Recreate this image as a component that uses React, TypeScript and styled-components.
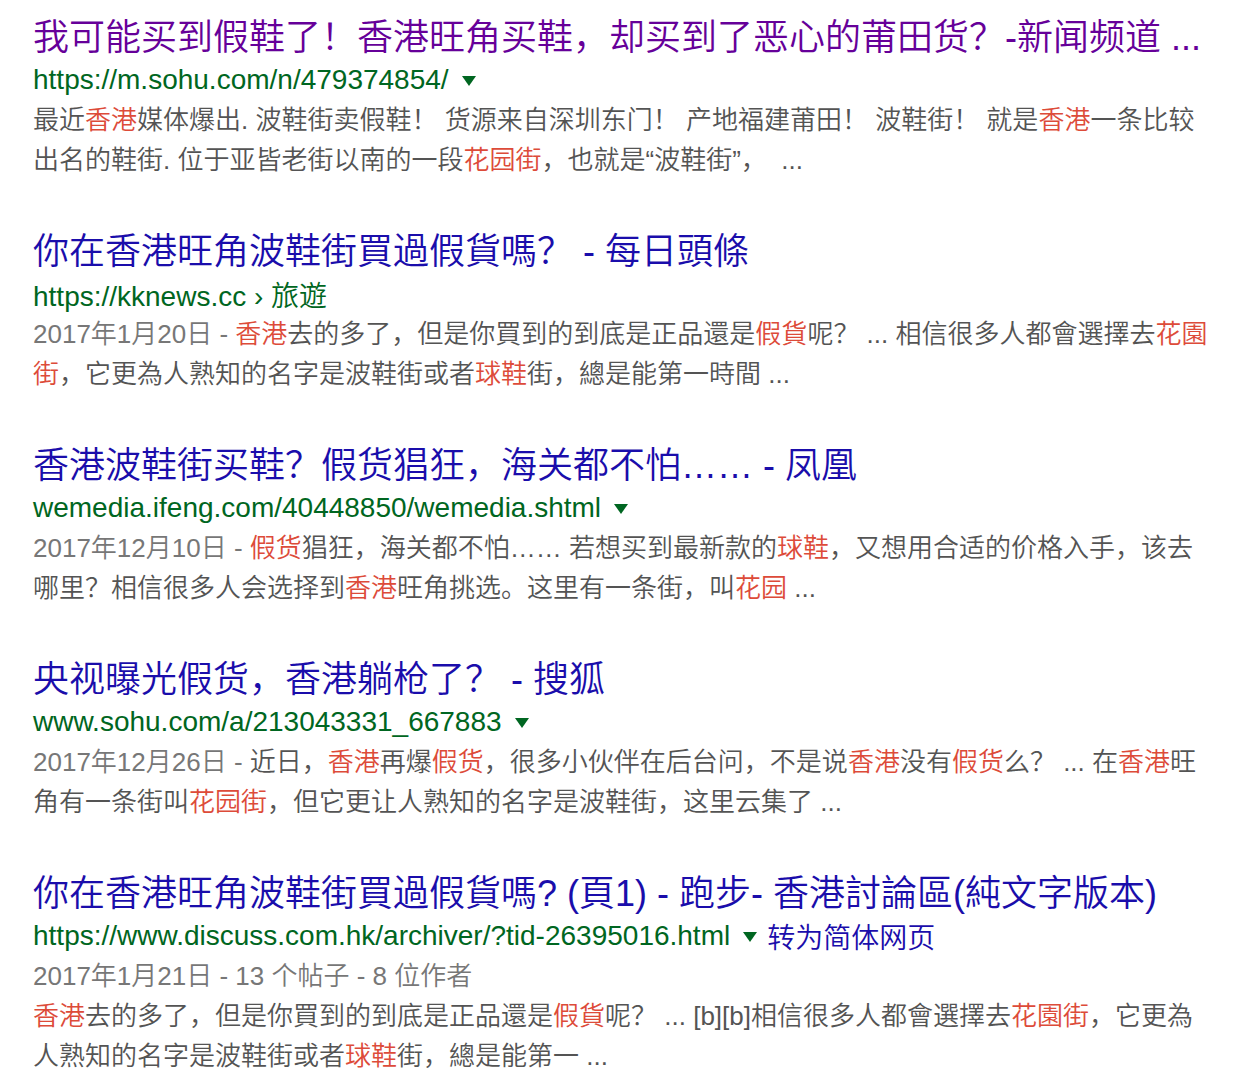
import styled, { createGlobalStyle } from "styled-components";

const GlobalStyle = createGlobalStyle`
  html, body {
    margin: 0;
    padding: 0;
    background: #ffffff;
  }
  body {
    font-family: "Liberation Sans", Arial, "Noto Sans CJK SC", sans-serif;
    font-weight: 350;
  }
`;

const Page = styled.main`
  padding: 16px 0 0 33px;
  display: flex;
  flex-direction: column;
  gap: 50px;
`;

const Result = styled.div`
  display: flex;
  flex-direction: column;
`;

const Title = styled.a<{ $visited?: boolean }>`
  display: block;
  font-size: 36px;
  line-height: 44px;
  color: ${(p) => (p.$visited ? "#660099" : "#1a0dab")};
  text-decoration: none;
  white-space: nowrap;
  cursor: pointer;
`;

const UrlRow = styled.div`
  display: flex;
  align-items: center;
  height: 40px;
  font-size: 28px;
  white-space: nowrap;
`;

const Cite = styled.cite`
  font-style: normal;
  color: #006621;
`;

const Arrow = styled.span`
  display: inline-block;
  width: 0;
  height: 0;
  margin: 2px 0 0 13px;
  border-left: 7px solid transparent;
  border-right: 7px solid transparent;
  border-top: 10px solid #006621;
`;

const Translate = styled.a`
  margin-left: 10px;
  color: #1a0dab;
  text-decoration: none;
`;

const Meta = styled.div`
  font-size: 26px;
  line-height: 40px;
  color: #777777;
`;

const Snippet = styled.div`
  font-size: 26px;
  line-height: 40px;
  color: #545454;
  width: 1180px;
  word-break: break-all;
`;

const DateText = styled.span`
  color: #777777;
`;

const Em = styled.em`
  font-style: normal;
  color: #dd4b39;
`;

export default function App() {
  return (
    <>
      <GlobalStyle />
      <Page>
        <Result>
          <Title $visited>
            我可能买到假鞋了！香港旺角买鞋，却买到了恶心的莆田货？-新闻频道 ...
          </Title>
          <UrlRow>
            <Cite>https://m.sohu.com/n/479374854/</Cite>
            <Arrow />
          </UrlRow>
          <Snippet>
            最近<Em>香港</Em>媒体爆出. 波鞋街卖假鞋！ 货源来自深圳东门！ 产地福建莆田！ 波鞋街！ 就是<Em>香港</Em>一条比较
            <br />
            出名的鞋街. 位于亚皆老街以南的一段<Em>花园街</Em>，也就是“波鞋街”，&nbsp; ...
          </Snippet>
        </Result>

        <Result>
          <Title>你在香港旺角波鞋街買過假貨嗎？ - 每日頭條</Title>
          <UrlRow>
            <Cite>https://kknews.cc › 旅遊</Cite>
          </UrlRow>
          <Snippet>
            <DateText>2017年1月20日 - </DateText>
            <Em>香港</Em>去的多了，但是你買到的到底是正品還是<Em>假貨</Em>呢？ ... 相信很多人都會選擇去<Em>花園</Em>
            <br />
            <Em>街</Em>，它更為人熟知的名字是波鞋街或者<Em>球鞋</Em>街，總是能第一時間 ...
          </Snippet>
        </Result>

        <Result>
          <Title>香港波鞋街买鞋？假货猖狂，海关都不怕…… - 凤凰</Title>
          <UrlRow>
            <Cite>wemedia.ifeng.com/40448850/wemedia.shtml</Cite>
            <Arrow />
          </UrlRow>
          <Snippet>
            <DateText>2017年12月10日 - </DateText>
            <Em>假货</Em>猖狂，海关都不怕…… 若想买到最新款的<Em>球鞋</Em>，又想用合适的价格入手，该去
            <br />
            哪里？相信很多人会选择到<Em>香港</Em>旺角挑选。这里有一条街，叫<Em>花园</Em> ...
          </Snippet>
        </Result>

        <Result>
          <Title>央视曝光假货，香港躺枪了？ - 搜狐</Title>
          <UrlRow>
            <Cite>www.sohu.com/a/213043331_667883</Cite>
            <Arrow />
          </UrlRow>
          <Snippet>
            <DateText>2017年12月26日 - </DateText>
            近日，<Em>香港</Em>再爆<Em>假货</Em>，很多小伙伴在后台问，不是说<Em>香港</Em>没有<Em>假货</Em>么？ ... 在<Em>香港</Em>旺
            <br />
            角有一条街叫<Em>花园街</Em>，但它更让人熟知的名字是波鞋街，这里云集了 ...
          </Snippet>
        </Result>

        <Result>
          <Title>你在香港旺角波鞋街買過假貨嗎? (頁1) - 跑步- 香港討論區(純文字版本)</Title>
          <UrlRow>
            <Cite>https://www.discuss.com.hk/archiver/?tid-26395016.html</Cite>
            <Arrow />
            <Translate>转为简体网页</Translate>
          </UrlRow>
          <Meta>2017年1月21日 - 13 个帖子 - 8 位作者</Meta>
          <Snippet>
            <Em>香港</Em>去的多了，但是你買到的到底是正品還是<Em>假貨</Em>呢？ ... [b][b]相信很多人都會選擇去<Em>花園街</Em>，它更為
            <br />
            人熟知的名字是波鞋街或者<Em>球鞋</Em>街，總是能第一 ...
          </Snippet>
        </Result>
      </Page>
    </>
  );
}
